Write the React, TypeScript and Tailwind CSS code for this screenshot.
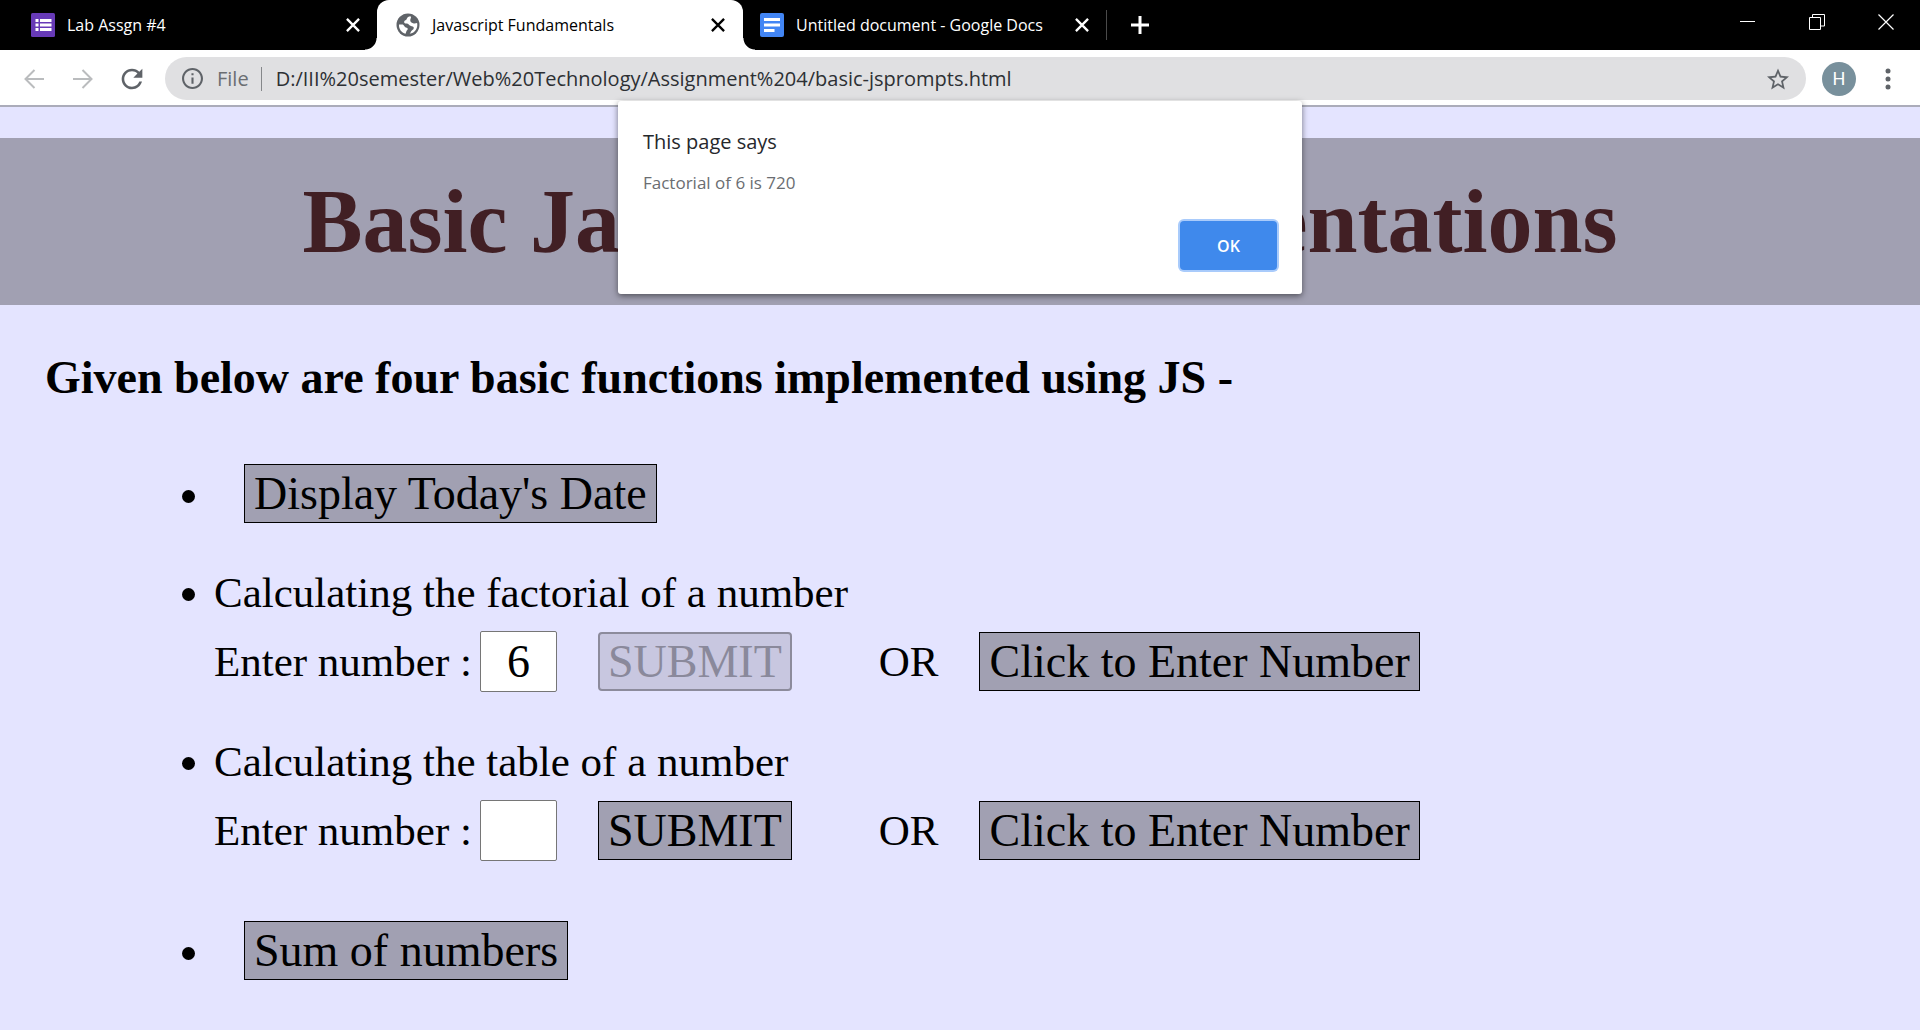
import React from "react";

const formsIcon = (
  <svg viewBox="0 0 24 24" className="size-6 shrink-0" aria-hidden="true">
    <rect width="24" height="24" rx="1.5" fill="#673ab7" />
    <path d="M4.500 6h3v3h-3zM4.500 10.500h3v3h-3zM4.500 15h3v3h-3zM9 6h11.500v3H9zM9 10.500h11.500v3H9zM9 15h11.500v3H9z" fill="#fff" />
  </svg>
);

const globeIcon = (
  <svg viewBox="0 0 24 24" className="size-6 shrink-0" aria-hidden="true">
    <circle cx="12" cy="12" r="11.500" fill="#5f6368" />
    <path
      fill="#fff"
      d="M14.500 3.200c-1.800.2-3.500 1.200-3.800 2.800-.2 1.500-2.200 1.200-2.600 2.700-.3 1.400 1.200 1.800 2.600 1.800 2 0 2.200 1.600 3.800 2.300 1.500.7 3.300.4 3.300 2.200 0 2-2.600 2.200-3.200 4.200-.3.900-.6 1.600-1.600 1.700 4.800-.300 8.300-4.200 8.300-8.900 0-.7-.1-1.300-.2-1.900-1.200.3-2.600.8-4 .2-1.700-.7-3.200-1.600-2.800-3.600.2-1.500 1.400-2.200.2-3.500zM3 11.500c-.3 4.500 2.500 8.200 6.500 9.200.8-1.200.6-2.600 1.800-3.600.8-.8.500-2-.6-2.300-2.900-.6-2.200-3.400-4.700-3.300z"
    />
  </svg>
);

const docsIcon = (
  <svg viewBox="0 0 24 24" className="size-6 shrink-0" aria-hidden="true">
    <rect width="24" height="24" rx="2" fill="#4285f4" />
    <path d="M4 5h16v3H4zM4 10.500h16v3H4zM4 16h10.500v3H4z" fill="#fff" />
  </svg>
);

function CloseGlyph() {
  return (
    <svg viewBox="0 0 12 12" className="size-3.5" aria-hidden="true">
      <path d="M.8.8l10.400 10.400M11.200.8L.8 11.200" stroke="currentColor" strokeWidth="2" fill="none" />
    </svg>
  );
}

function Tab({ icon, title, active = false }: { icon: React.ReactNode; title: string; active?: boolean }) {
  return (
    <div
      className={
        active
          ? "relative flex w-[366px] items-center rounded-t-xl bg-white pl-[19px] pr-[18px] text-black"
          : "flex items-center pl-[17px] pr-[17px] text-white"
      }
    >
      {active && (
        <>
          <span className="absolute bottom-0 right-full size-3 bg-[radial-gradient(circle_at_0_0,#000_11px,#fff_12px)]" />
          <span className="absolute bottom-0 left-full size-3 bg-[radial-gradient(circle_at_100%_0,#000_11px,#fff_12px)]" />
        </>
      )}
      {icon}
      <span className="ml-3 flex-1 whitespace-nowrap text-base">{title}</span>
      <button type="button" aria-label={`Close ${title}`} className="ml-8 flex size-3.5 items-center justify-center">
        <CloseGlyph />
      </button>
    </div>
  );
}

function TabStrip() {
  return (
    <header className="flex h-[50px] bg-black">
      <div className="flex w-[377px] pl-[14px] *:flex-1">
        <Tab icon={formsIcon} title="Lab Assgn #4" />
      </div>
      <Tab icon={globeIcon} title="Javascript Fundamentals" active />
      <Tab icon={docsIcon} title="Untitled document - Google Docs" />
      <span className="h-[30px] w-px self-center bg-[#4a4a4a]" />
      <button type="button" aria-label="New tab" className="flex w-[66px] items-center justify-center text-white">
        <svg viewBox="0 0 20 20" className="size-5" aria-hidden="true">
          <path d="M10 1v18M1 10h18" stroke="currentColor" strokeWidth="3" />
        </svg>
      </button>
      <div className="ml-auto flex h-[43px] text-white">
        <button type="button" aria-label="Minimize" className="flex w-[69px] items-center justify-center">
          <svg viewBox="0 0 16 16" className="size-4" aria-hidden="true">
            <path d="M0 7.500h15" stroke="currentColor" />
          </svg>
        </button>
        <button type="button" aria-label="Restore" className="flex w-[69px] items-center justify-center">
          <svg viewBox="0 0 16 16" className="size-4" aria-hidden="true">
            <path d="M.5 3.500h11v12H.5zM3.500 3.500v-3h12v11.500h-4" stroke="currentColor" fill="none" />
          </svg>
        </button>
        <button type="button" aria-label="Close window" className="flex w-[69px] items-center justify-center">
          <svg viewBox="0 0 16 16" className="size-4" aria-hidden="true">
            <path d="M.5.5l15 15M15.500.5l-15 15" stroke="currentColor" strokeWidth="1.200" />
          </svg>
        </button>
      </div>
    </header>
  );
}

function Toolbar() {
  return (
    <nav className="flex items-center border-b-2 border-[#abacba] bg-white pb-[5px] pl-[9px] pt-[7px]">
      <button type="button" aria-label="Back" className="flex w-[49px] justify-center">
        <svg viewBox="0 0 20 20" className="size-5" aria-hidden="true">
          <path d="M20 10H2M10.500 1L1.500 10l9 9" stroke="#babcbe" strokeWidth="2" fill="none" />
        </svg>
      </button>
      <button type="button" aria-label="Forward" className="flex w-[49px] justify-center">
        <svg viewBox="0 0 20 20" className="size-5" aria-hidden="true">
          <path d="M0 10h18M9.500 1l9 9-9 9" stroke="#babcbe" strokeWidth="2" fill="none" />
        </svg>
      </button>
      <button type="button" aria-label="Reload" className="flex w-[49px] justify-center">
        <svg viewBox="3.500 3.500 17 17" className="size-[22px]" aria-hidden="true">
          <path
            fill="#5f6368"
            d="M17.650 6.350C16.200 4.900 14.210 4 12 4c-4.420 0-7.990 3.580-7.990 8s3.570 8 7.990 8c3.730 0 6.840-2.550 7.730-6h-2.080c-.820 2.330-3.040 4-5.650 4-3.310 0-6-2.690-6-6s2.690-6 6-6c1.660 0 3.140.690 4.220 1.780L13 11h7V4l-2.350 2.350z"
          />
        </svg>
      </button>
      <div className="ml-[9px] flex h-[43px] flex-1 items-center rounded-full bg-[#e0e0e2] px-[17px] text-xl">
        <svg viewBox="2 2 20 20" className="size-[21px]" aria-hidden="true">
          <path
            fill="#5f6368"
            d="M11 17h2v-6h-2v6zm1-15C6.480 2 2 6.480 2 12s4.480 10 10 10 10-4.480 10-10S17.520 2 12 2zm0 18c-4.410 0-8-3.590-8-8s3.590-8 8-8 8 3.590 8 8-3.590 8-8 8zM11 9h2V7h-2v2z"
          />
        </svg>
        <span className="ml-[14px] text-[#6b6e72]">File</span>
        <span className="ml-3 mr-[14px] h-6 w-px bg-[#85878a]" />
        <input
          type="text"
          aria-label="Address"
          defaultValue="D:/III%20semester/Web%20Technology/Assignment%204/basic-jsprompts.html"
          className="min-w-0 flex-1 bg-transparent text-[#2d3034] outline-none"
        />
        <button type="button" aria-label="Bookmark this page">
          <svg viewBox="2 2 20 19" className="size-[22px]" aria-hidden="true">
            <path
              fill="#5f6368"
              d="M22 9.240l-7.190-.620L12 2 9.190 8.630 2 9.240l5.460 4.730L5.820 21 12 17.270 18.180 21l-1.630-7.030L22 9.240zM12 15.400l-3.760 2.270 1-4.280-3.320-2.880 4.380-.380L12 6.100l1.710 4.040 4.380.380-3.320 2.880 1 4.280L12 15.400z"
            />
          </svg>
        </button>
      </div>
      <button type="button" aria-label="Profile" className="ml-4 flex size-[34px] items-center justify-center rounded-full bg-[#78909c] font-['Roboto',sans-serif] text-lg text-white">
        H
      </button>
      <button type="button" aria-label="Menu" className="flex w-16 justify-center">
        <svg viewBox="0 0 6 22" className="h-[22px] w-1.5" aria-hidden="true">
          <circle cx="3" cy="3" r="2.500" fill="#5f6368" />
          <circle cx="3" cy="11" r="2.500" fill="#5f6368" />
          <circle cx="3" cy="19" r="2.500" fill="#5f6368" />
        </svg>
      </button>
    </nav>
  );
}

function ActionButton({ children, disabled = false }: { children: string; disabled?: boolean }) {
  return (
    <button
      type="button"
      disabled={disabled}
      className={
        disabled
          ? "h-[59px] rounded border-2 border-[#8c8b9c] bg-[#c8c7e0] px-2 text-[46px]/[50px] text-[#8a899b]"
          : "h-[59px] border border-black bg-[#a1a0b2] px-[9px] text-[46px]/[50px] text-black"
      }
    >
      {children}
    </button>
  );
}

function NumberTask({ id, title, value, submitted = false }: { id: string; title: string; value?: string; submitted?: boolean }) {
  return (
    <li className="mt-[45px]">
      <p className="mb-[13px]">{title}</p>
      <div className="flex items-center">
        <label htmlFor={id}>Enter number :</label>
        <input
          id={id}
          type="text"
          defaultValue={value}
          className="ml-2 h-[61px] w-[77px] rounded-xs border border-[#767676] bg-white text-center text-[46px] outline-none"
        />
        <span className="ml-[41px] flex">
          <ActionButton disabled={submitted}>SUBMIT</ActionButton>
        </span>
        <span className="ml-[87px] mr-[41px]">OR</span>
        <ActionButton>Click to Enter Number</ActionButton>
      </div>
    </li>
  );
}

function AlertDialog() {
  return (
    <div
      role="alertdialog"
      aria-labelledby="alert-title"
      aria-describedby="alert-message"
      className="absolute left-1/2 top-[101px] z-10 w-[684px] -translate-x-1/2 rounded-[3px] bg-white px-[25px] pb-6 pt-[27px] shadow-[0_2px_6px_rgba(0,0,0,0.5)]"
    >
      <h2 id="alert-title" className="text-xl/7 text-[#26282c]">
        This page says
      </h2>
      <p id="alert-message" className="mt-[15px] text-[17px]/6 text-[#6a6d71]">
        Factorial of 6 is 720
      </p>
      <div className="mt-[26px] flex justify-end">
        <button type="button" className="h-[49px] w-[97px] rounded bg-[#3f89ec] text-base font-semibold text-white ring-2 ring-[#a9cbfb]">
          OK
        </button>
      </div>
    </div>
  );
}

export default function App() {
  return (
    <div className="relative flex min-h-screen flex-col bg-[#e4e4ff] font-['Open_Sans',sans-serif]">
      <TabStrip />
      <Toolbar />
      <AlertDialog />
      <main className="flex-1 pt-[31px] font-['Liberation_Serif',serif] text-black">
        <h1 className="bg-[#a1a0b2] py-8 text-center text-[90px]/[103px] font-bold text-[#411f24]">
          Basic JavaScript Implementations
        </h1>
        <h2 className="mt-[47px] pl-[45px] text-[46px]/[52px] font-bold">
          Given below are four basic functions implemented using JS -
        </h2>
        <ul className="mt-[60px] list-disc pl-[214px] text-[43px]/[50px]">
          <li>
            <span className="ml-[30px]">
              <ActionButton>Display Today's Date</ActionButton>
            </span>
          </li>
          <NumberTask id="factorial-number" title="Calculating the factorial of a number" value="6" submitted />
          <NumberTask id="table-number" title="Calculating the table of a number" />
          <li className="mt-[60px]">
            <span className="ml-[30px]">
              <ActionButton>Sum of numbers</ActionButton>
            </span>
          </li>
        </ul>
      </main>
    </div>
  );
}
